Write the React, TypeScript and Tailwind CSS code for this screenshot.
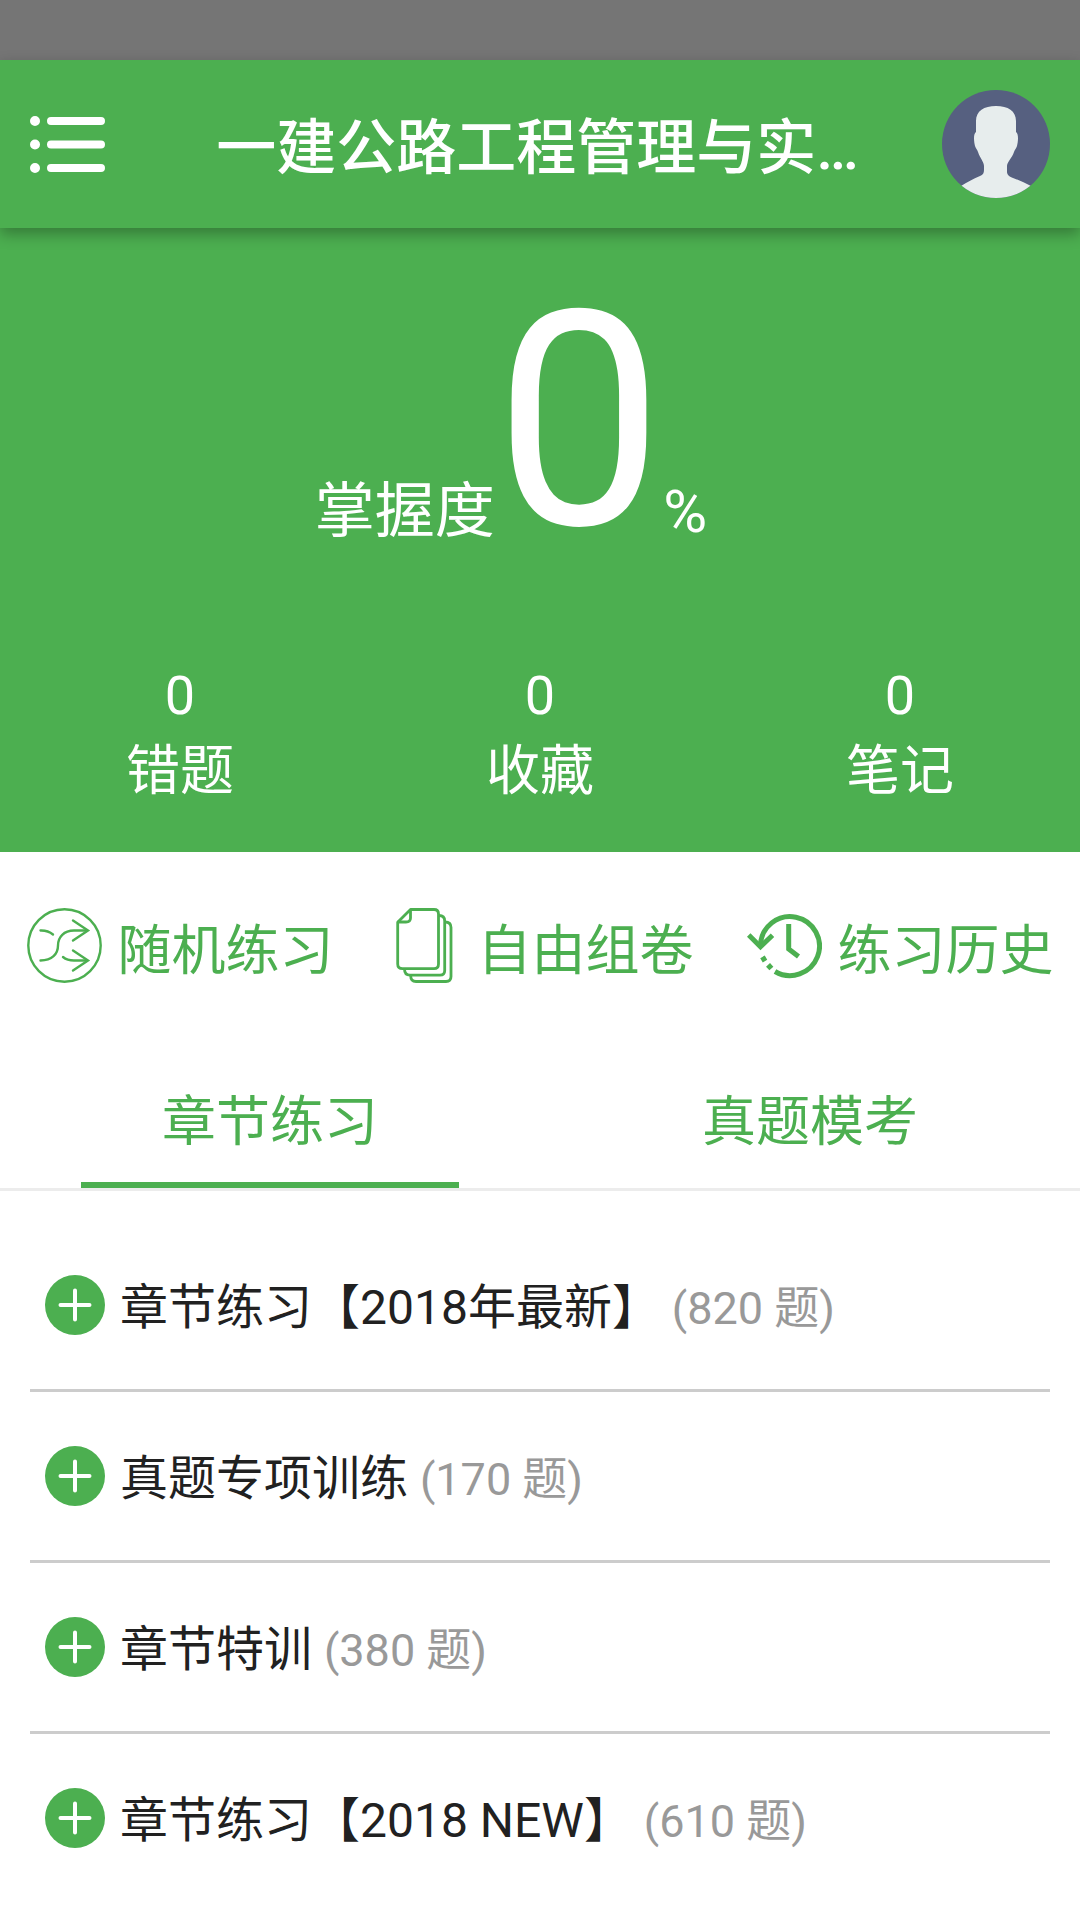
import React, { useState } from 'react';

interface Chapter {
  title: string;
  count: number;
}

const stats = [
  { label: '错题', value: 0 },
  { label: '收藏', value: 0 },
  { label: '笔记', value: 0 }
];

const tabs = ['章节练习', '真题模考'];

const chapters: Chapter[] = [
  { title: '章节练习【2018年最新】', count: 820 },
  { title: '真题专项训练', count: 170 },
  { title: '章节特训', count: 380 },
  { title: '章节练习【2018 NEW】', count: 610 }
];

const MenuIcon = () => (
  <svg className="block h-[60px] w-[75px]" viewBox="0 0 75 60" fill="none" stroke="currentColor" strokeLinecap="round">
    <path d="M21 7H71M21 30.5H71M21 54H71" strokeWidth="8" />
    <path d="M5 7h.01M5 30.5h.01M5 54h.01" strokeWidth="10" />
  </svg>
);

const Avatar = () => (
  <svg className="block size-[108px]" viewBox="0 0 108 108">
    <clipPath id="avatar">
      <circle cx="54" cy="54" r="54" />
    </clipPath>
    <g clipPath="url(#avatar)">
      <rect width="108" height="108" fill="#566080" />
      <path
        d="M54 16C66 16 74 21 74 31V42C77 44 76 52 75 56C74 59 73 59 72 62C70 68 65 72 65 76V82C65 85 68 87 71 88C77 90 83 93 89 96V108H19V96C25 92 31 89 38 86C41 85 42 83 42 80V76C42 72 38 68 36 62C35 59 34 59 33 56C32 52 31 44 34 42V31C34 21 42 16 54 16Z"
        fill="#e7eded"
      />
    </g>
  </svg>
);

const ShuffleIcon = () => (
  <svg className="block size-[75px]" viewBox="0 0 75 75" fill="none" stroke="currentColor" strokeWidth="2.4" strokeLinecap="round">
    <circle cx="37.5" cy="37.5" r="36.2" />
    <path d="M13.5 22.5C19 22.3 23 24 26 26.5" />
    <path d="M13.5 52.5C25 52.5 31 46 31 37.5C31 29 37 22.5 47 22.5H60" />
    <path d="M36 49C39 51.5 42 52.5 47 52.5H60" />
    <path d="M46 12.5L61 22.5L46 32.5M46 42.5L61 52.5L46 62.5" />
  </svg>
);

const PapersIcon = () => (
  <svg className="block size-[75px]" viewBox="0 0 75 75" fill="none" stroke="currentColor" strokeWidth="2.8">
    <path d="M23.5 1.5H47Q51.5 1.5 51.5 6V56Q51.5 60.7 47 60.7H15.5Q10.7 60.7 10.7 56V14.2Z" strokeLinejoin="round" />
    <path d="M23.5 1.5V10Q23.5 14 19 14H10.7" />
    <path d="M52 7.5Q57.7 7.5 57.7 13V62.5Q57.7 67.2 53 67.2H23Q17.5 67.2 17.5 61" />
    <path d="M58 14Q64 14 64 19.5V68.5Q64 73.5 59 73.5H29Q23.7 73.5 23.7 67.5" />
  </svg>
);

const HistoryIcon = () => (
  <svg className="block size-[75px]" viewBox="0 0 75 75" fill="none" stroke="currentColor" strokeWidth="5">
    <path d="M13.5 37A29.5 29.5 0 1 1 28 63.5" />
    <path d="M1.7 27L13.5 38.7L25.5 27.3" />
    <path d="M41.7 16V41L51.5 48.5" />
    <path d="M14.5 52.3L19 49.7M20.7 60.5L24.7 56.9" />
  </svg>
);

const PlusIcon = () => (
  <svg className="block size-[60px] shrink-0" viewBox="0 0 60 60">
    <circle cx="30" cy="30" r="30" fill="#4caf50" />
    <path d="M15.5 30H44.5M30 15.5V44.5" stroke="#fff" strokeWidth="4" strokeLinecap="round" />
  </svg>
);

const actions = [
  { label: '随机练习', icon: ShuffleIcon },
  { label: '自由组卷', icon: PapersIcon },
  { label: '练习历史', icon: HistoryIcon }
];

const App = () => {
  const [activeTab, setActiveTab] = useState(tabs[0]);

  return (
    <div className="min-h-screen bg-white font-['Roboto','Noto_Sans_CJK_SC',sans-serif] text-[54px] leading-[72px] text-[#4caf50]">
      {/* Status bar */}
      <div className="h-[60px] bg-[#757575]" />

      {/* Toolbar */}
      <header className="relative flex h-[168px] items-center bg-[#4caf50] px-[30px] text-white shadow-[0_6px_14px_rgba(0,0,0,0.3)]">
        <button type="button" aria-label="菜单" className="pr-7">
          <MenuIcon />
        </button>
        <h1 className="min-w-0 flex-1 truncate pt-2.5 text-center text-[60px] font-medium">一建公路工程管理与实…</h1>
        <button type="button" aria-label="我的">
          <Avatar />
        </button>
      </header>

      {/* Mastery and stats */}
      <section className="bg-[#4caf50] pt-[38px] pb-11 text-white">
        <div className="flex items-end justify-center pr-[58px] text-[60px]">
          <span className="pb-[30px]">掌握度</span>
          <span className="text-[300px] leading-[312px]">0</span>
          <span className="pb-[30px]">%</span>
        </div>
        <div className="mt-[82px] grid grid-cols-3">
          {stats.map((stat) => (
            <button key={stat.label} type="button" className="flex flex-col items-center gap-1">
              <span>{stat.value}</span>
              <span>{stat.label}</span>
            </button>
          ))}
        </div>
      </section>

      {/* Practice shortcuts */}
      <section className="grid grid-cols-3 py-14">
        {actions.map(({ label, icon: Icon }) => (
          <button key={label} type="button" className="flex items-center justify-center gap-4">
            <Icon />
            <span className="pt-3 leading-[60px]">{label}</span>
          </button>
        ))}
      </section>

      {/* Tabs */}
      <div role="tablist" className="grid grid-cols-2 border-b-3 border-[#ececec]">
        {tabs.map((tab) => (
          <button
            key={tab}
            type="button"
            role="tab"
            aria-selected={tab === activeTab}
            onClick={() => setActiveTab(tab)}
            className="flex flex-col items-center pt-12"
          >
            <span>{tab}</span>
            <span className={tab === activeTab ? 'mt-[23px] h-1.5 w-[70%] bg-[#4caf50]' : 'mt-[23px] h-1.5 w-[70%]'} />
          </button>
        ))}
      </div>

      {/* Chapter list */}
      <ul className="divide-y-3 divide-[#cccccc] px-[30px] pt-[30px]">
        {chapters.map((chapter) => (
          <li key={chapter.title}>
            <button type="button" className="flex h-[168px] w-full items-center gap-[15px] px-[15px] text-left">
              <PlusIcon />
              <span className="pt-1.5 text-[48px] text-[#212121]">
                {chapter.title} <span className="text-[45px] text-[#999999]">({chapter.count} 题)</span>
              </span>
            </button>
          </li>
        ))}
      </ul>
    </div>
  );
};

export default App;
